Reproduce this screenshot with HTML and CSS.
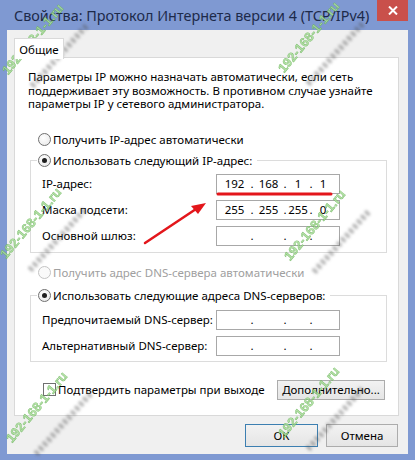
FILE: index.html
```html
<!DOCTYPE html>
<html lang="ru">
<head>
<meta charset="utf-8">
<link rel="stylesheet" href="styles.css">
</head>
<body>
<div class="window">
  <div class="titlebar">
    <div class="title">Свойства: Протокол Интернета версии 4 (TCP/IPv4)</div>
    <div class="close">
      <svg width="10" height="9" viewBox="0 0 10 9"><path d="M1 0.5 L9 8.5 M9 0.5 L1 8.5" stroke="#fff" stroke-width="2"/></svg>
    </div>
  </div>
  <div class="client">
    <div class="tabs"><div class="tab">Общие</div></div>
    <div class="panel">
      <p class="intro">Параметры IP можно назначать автоматически, если сеть<br>поддерживает эту возможность. В противном случае узнайте<br>параметры IP у сетевого администратора.</p>
      <div class="radio-row first"><span class="radio"></span><span>Получить IP-адрес автоматически</span></div>
      <fieldset class="group ip-group">
        <legend><span class="radio checked"></span><span>Использовать следующий IP-адрес:</span></legend>
        <div class="rows">
          <div class="row"><span class="label">IP-адрес:</span><div class="ip"><span>192</span><i>.</i><span>168</span><i>.</i><span>1</span><i>.</i><span>1</span></div></div>
          <div class="row"><span class="label">Маска подсети:</span><div class="ip"><span>255</span><i>.</i><span>255</span><i>.</i><span>255</span><i>.</i><span>0</span></div></div>
          <div class="row"><span class="label">Основной шлюз:</span><div class="ip"><span></span><i>.</i><span></span><i>.</i><span></span><i>.</i><span></span></div></div>
        </div>
      </fieldset>
      <div class="radio-row dns-auto disabled"><span class="radio"></span><span>Получить адрес DNS-сервера автоматически</span></div>
      <fieldset class="group dns-group">
        <legend><span class="radio checked"></span><span>Использовать следующие адреса DNS-серверов:</span></legend>
        <div class="rows">
          <div class="row"><span class="label">Предпочитаемый DNS-сервер:</span><div class="ip"><span></span><i>.</i><span></span><i>.</i><span></span><i>.</i><span></span></div></div>
          <div class="row"><span class="label">Альтернативный DNS-сервер:</span><div class="ip"><span></span><i>.</i><span></span><i>.</i><span></span><i>.</i><span></span></div></div>
        </div>
      </fieldset>
      <div class="confirm-row">
        <div class="check-wrap"><span class="checkbox"></span><span>Подтвердить параметры при выходе</span></div>
        <button class="btn advanced">Дополнительно...</button>
      </div>
    </div>
    <div class="buttons">
      <button class="btn default">ОК</button>
      <button class="btn">Отмена</button>
    </div>
  </div>
  <svg class="marks" width="415" height="465" viewBox="0 0 415 465">
    <defs>
      <filter id="blur" x="-30%" y="-30%" width="160%" height="160%"><feGaussianBlur stdDeviation="1.5"/></filter>
      <g id="wm">
        <path d="M-4 44 L52 -18" stroke="#555" stroke-width="6" stroke-dasharray="3 3" opacity="0.5" filter="url(#blur)"/>
        <text x="0" y="0" transform="rotate(-50)" text-anchor="middle" class="wm-text">192-168-1-1.ru</text>
      </g>
    </defs>
    <use href="#wm" x="36" y="42"/>
    <use href="#wm" x="312" y="40"/>
    <use href="#wm" x="34" y="226"/>
    <use href="#wm" x="318" y="228"/>
    <use href="#wm" x="40" y="410"/>
    <use href="#wm" x="312" y="405"/>
    <path d="M218 194 L331 194" stroke="#e3161b" stroke-width="3" stroke-linecap="round"/>
    <path d="M145 243 L199 207" stroke="#e3161b" stroke-width="2.5" stroke-linecap="round"/>
    <path d="M206 203 L191 206 L198 214 Z" fill="#e3161b"/>
  </svg>
</div>
</body>
</html>
```
FILE: styles.css
```css
html, body {
  margin: 0;
  padding: 0;
  background: #ffffff;
}
body {
  font-family: "Noto Sans", "Open Sans", sans-serif;
  font-size: 11.5px;
  color: #000;
}
.window {
  position: relative;
  width: 415px;
  height: 460px;
  box-sizing: border-box;
  padding: 0 7px 6px 7px;
  background: #7f99d2;
  display: flex;
  flex-direction: column;
}
.titlebar {
  height: 30px;
  display: flex;
  justify-content: space-between;
  align-items: flex-start;
}
.title {
  margin-left: 7px;
  padding-top: 1px;
  line-height: 30px;
  font-size: 14.4px;
  color: #1d2a4a;
  white-space: nowrap;
}
.close {
  width: 31px;
  height: 21px;
  background: #c9504b;
  display: flex;
  align-items: center;
  justify-content: center;
}
.client {
  flex: 1;
  background: #f0f0f0;
  padding: 8px 9px 0 7px;
  display: flex;
  flex-direction: column;
}
.tabs {
  display: flex;
  height: 20px;
  position: relative;
  z-index: 1;
  margin-bottom: -1px;
}
.tab {
  width: 48px;
  height: 20px;
  background: #fff;
  border: 1px solid #d9d9d9;
  border-bottom: none;
  line-height: 21px;
  text-align: center;
}
.panel {
  height: 359px;
  box-sizing: border-box;
  background: #fff;
  border: 1px solid #d9d9d9;
  padding: 12px 11px 0 13px;
  display: flex;
  flex-direction: column;
  white-space: nowrap;
}
.intro {
  margin: 0;
  line-height: 13.5px;
}
.radio-row {
  display: flex;
  align-items: center;
  height: 16px;
  padding-left: 10px;
  gap: 2px;
}
.radio-row.first { margin-top: 21px; }
.radio-row.dns-auto { margin-top: 12px; }
.radio-row.disabled { color: #a0a0a0; }
.radio {
  width: 11px;
  height: 11px;
  border: 1px solid #707070;
  border-radius: 50%;
  background: radial-gradient(circle at 40% 35%, #ffffff, #e6e6e6);
  display: inline-flex;
  align-items: center;
  justify-content: center;
  flex: none;
}
.disabled .radio { border-color: #c4c4c4; background: #fafafa; }
.radio.checked::after {
  content: "";
  width: 5px;
  height: 5px;
  border-radius: 50%;
  background: #1f1f1f;
}
.group {
  margin: 5px 0 0 2px;
  border: 1px solid #dcdcdc;
  padding: 5px 0 6px 6px;
  min-width: 0;
}
.dns-group { margin-top: 7px; padding-top: 6px; padding-bottom: 5px; }
.group legend {
  display: flex;
  align-items: center;
  gap: 2px;
  height: 16px;
  padding: 0 5px 0 1px;
}
.rows {
  display: flex;
  flex-direction: column;
  gap: 6px;
  padding-left: 5px;
}
.row {
  display: grid;
  grid-template-columns: 174px 124px;
  align-items: center;
  height: 20px;
}
.ip {
  height: 20px;
  box-sizing: border-box;
  border: 1px solid #a8a8a8;
  background: #fff;
  display: grid;
  grid-template-columns: 29px 6px 27px 6px 20px 6px 18px;
  padding-left: 3px;
  align-items: center;
  line-height: 18px;
}
.ip span { text-align: center; }
.ip i { font-style: normal; text-align: center; }
.confirm-row {
  margin-top: 18px;
  margin-right: 2px;
  display: flex;
  justify-content: space-between;
  align-items: center;
  height: 20px;
}
.check-wrap {
  display: flex;
  align-items: center;
  gap: 2px;
  padding-left: 15px;
}
.checkbox {
  width: 11px;
  height: 11px;
  border: 1px solid #707070;
  background: #fff;
}
.btn {
  font: inherit;
  color: #000;
  height: 20px;
  border: 1px solid #acacac;
  background: linear-gradient(#f2f2f2, #e5e5e5);
  padding: 0;
  margin: 0;
}
.advanced { width: 108px; }
.buttons {
  margin-top: 8px;
  display: flex;
  justify-content: flex-end;
  gap: 8px;
  padding-right: 1px;
}
.buttons .btn { height: 23px; width: 72px; }
.buttons .btn.default { width: 73px; border-color: #3c7fb1; }
.marks {
  position: absolute;
  left: 0;
  top: 0;
  pointer-events: none;
}
.wm-text {
  font-family: "Liberation Sans", sans-serif;
  font-size: 13px;
  font-weight: bold;
  fill: #a8dc98;
  stroke: #5fae4f;
  stroke-width: 0.4px;
  opacity: 0.85;
}
```
